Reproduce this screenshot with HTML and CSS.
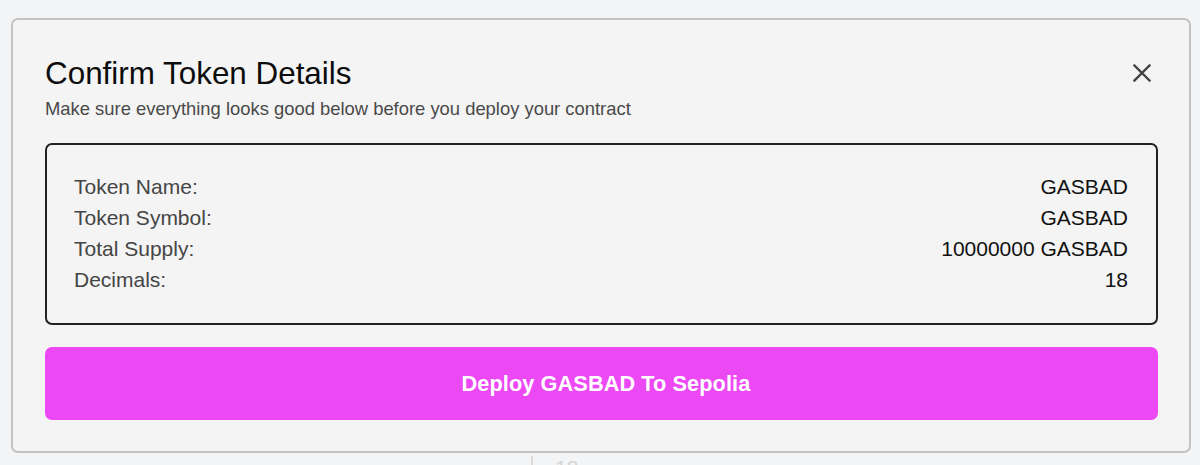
FILE: index.html
```html
<!DOCTYPE html>
<html lang="en">
<head>
<meta charset="utf-8">
<title>Confirm Token Details</title>
<link rel="stylesheet" href="styles.css">
</head>
<body>
  <div class="modal" role="dialog" aria-labelledby="modal-title">
    <div class="modal-header">
      <div class="heading">
        <h2 id="modal-title" class="title">Confirm Token Details</h2>
        <p class="subtitle">Make sure everything looks good below before you deploy your contract</p>
      </div>
      <button class="close" aria-label="Close">
        <svg width="18" height="18" viewBox="0 0 18 18" aria-hidden="true">
          <path d="M1.5 1.5 L16.5 16.5 M16.5 1.5 L1.5 16.5" stroke="#444" stroke-width="2.4" stroke-linecap="square" fill="none"/>
        </svg>
      </button>
    </div>
    <div class="details">
      <div class="row"><span class="label">Token Name:</span><span class="value">GASBAD</span></div>
      <div class="row"><span class="label">Token Symbol:</span><span class="value">GASBAD</span></div>
      <div class="row"><span class="label">Total Supply:</span><span class="value">10000000 GASBAD</span></div>
      <div class="row"><span class="label">Decimals:</span><span class="value">18</span></div>
    </div>
    <button class="deploy">Deploy GASBAD To Sepolia</button>
  </div>
  <div class="bg-row"><span class="bg-cell">18</span></div>
</body>
</html>
```

FILE: styles.css
```css
html, body {
  margin: 0;
  padding: 0;
}

body {
  width: 1200px;
  height: 465px;
  overflow: hidden;
  background: #f3f4f5;
  font-family: "Liberation Sans", Helvetica, Arial, sans-serif;
  padding-top: 18px;
  box-sizing: border-box;
}

.modal {
  margin-left: 11px;
  width: 1180px;
  box-sizing: border-box;
  background: #f4f4f4;
  border: 2px solid #c3c3c3;
  border-radius: 7px;
  padding: 36px 31px 31px 32px;
  display: flex;
  flex-direction: column;
}

.modal-header {
  display: flex;
  justify-content: space-between;
  align-items: flex-start;
}

.title {
  margin: 0;
  font-size: 31.4px;
  line-height: 36px;
  font-weight: 400;
  color: #0d0d0d;
}

.subtitle {
  margin: 6px 0 0;
  font-size: 18.4px;
  line-height: 22px;
  color: #4a4a4a;
}

.close {
  margin-top: 1px;
  width: 32px;
  height: 32px;
  padding: 0;
  border: 0;
  background: transparent;
  display: flex;
  align-items: center;
  justify-content: center;
}

.details {
  margin-top: 23px;
  border: 2px solid #222;
  border-radius: 7px;
  padding: 26px 28px 28px 27px;
  display: flex;
  flex-direction: column;
}

.row {
  display: flex;
  justify-content: space-between;
  font-size: 21px;
  line-height: 31px;
}

.label {
  color: #454545;
}

.value {
  color: #111;
}

.deploy {
  margin-top: 22px;
  height: 73px;
  padding: 0 0 0 9px;
  border: 0;
  border-radius: 7px;
  background: #ec49f5;
  color: #fff;
  font-family: "Liberation Sans", Helvetica, Arial, sans-serif;
  font-weight: 700;
  font-size: 21.7px;
  letter-spacing: 0.1px;
}

.bg-row {
  margin-left: 531px;
  border-left: 2px solid #dcdcdc;
  height: 20px;
  padding-left: 22px;
}

.bg-cell {
  display: block;
  margin-top: 3px;
  font-size: 21px;
  line-height: 24px;
  color: #d4d4d4;
}
```
